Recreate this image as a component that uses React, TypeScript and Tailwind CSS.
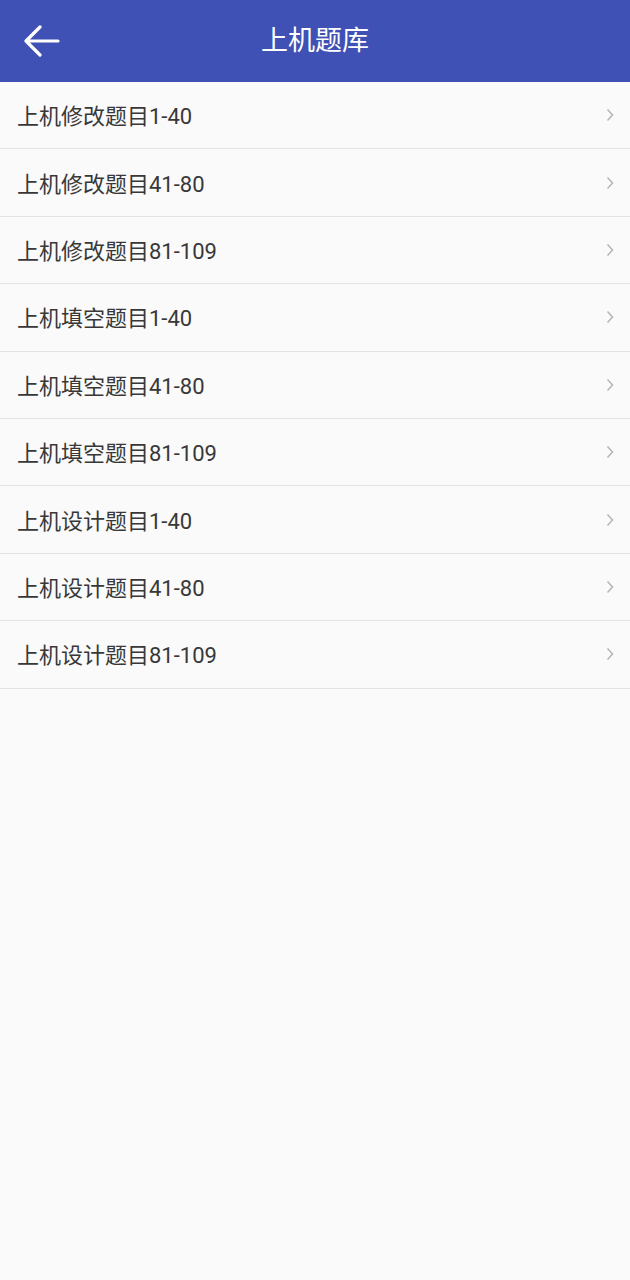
import React from "react";

const items = [
  "上机修改题目1-40",
  "上机修改题目41-80",
  "上机修改题目81-109",
  "上机填空题目1-40",
  "上机填空题目41-80",
  "上机填空题目81-109",
  "上机设计题目1-40",
  "上机设计题目41-80",
  "上机设计题目81-109",
];

export default function App() {
  return (
    <div
      className="w-[630px] h-[1280px] bg-[#fafafa] flex flex-col"
      style={{ fontFamily: 'Roboto, "Noto Sans CJK SC", sans-serif' }}
    >
      <header className="h-[82px] bg-[#3f51b5] flex items-center relative shrink-0">
        <button className="w-[82px] h-[82px] flex items-center pl-[23px]">
          <svg width="37" height="32" viewBox="0 0 37 32" fill="none">
            <path d="M35 16H3M17 2L3 16l14 14" stroke="white" strokeWidth="3.2" strokeLinecap="round" strokeLinejoin="round" />
          </svg>
        </button>
        <h1 className="absolute left-0 right-0 text-center text-white text-[27px] pointer-events-none">上机题库</h1>
      </header>
      <ul>
        {items.map((t, i) => (
          <li key={i} className="h-[67.4px] border-b border-[#e3e3e3] flex items-center justify-between pl-[17px] pr-[16px]">
            <span className="text-[22px] text-[#383838] pt-[3px]">{t}</span>
            <svg width="8" height="14" viewBox="0 0 8 14" fill="none">
              <path d="M1.5 1.5l5 5.5-5 5.5" stroke="#b5b5b5" strokeWidth="1.5" />
            </svg>
          </li>
        ))}
      </ul>
    </div>
  );
}
